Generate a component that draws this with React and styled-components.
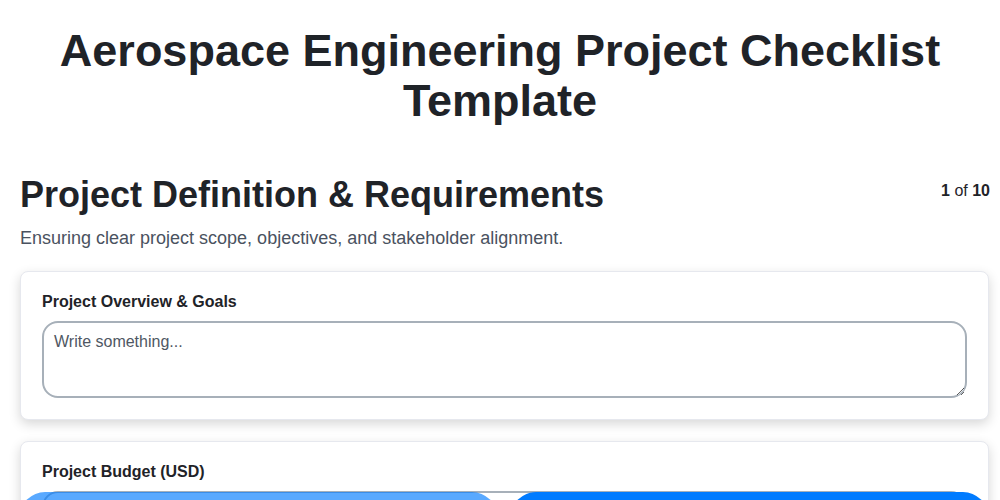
import styled, { createGlobalStyle } from 'styled-components';

const GlobalStyle = createGlobalStyle`
  * { box-sizing: border-box; }
  body {
    margin: 0;
    background: #ffffff;
    color: #1f2328;
    font-family: "Liberation Sans", Arial, sans-serif;
  }
`;

function App() {
  return (
    <>
      <GlobalStyle />
      <Page>
        <Title>Aerospace Engineering Project Checklist Template</Title>
        <Main>
          <SectionHead>
            <SectionTitle>Project Definition &amp; Requirements</SectionTitle>
            <Counter><b>1</b> of <b>10</b></Counter>
          </SectionHead>
          <SectionText>Ensuring clear project scope, objectives, and stakeholder alignment.</SectionText>

          <Card>
            <Label htmlFor="overview">Project Overview &amp; Goals</Label>
            <TextArea id="overview" placeholder="Write something..." />
          </Card>

          <Card>
            <Label htmlFor="budget">Project Budget (USD)</Label>
            <Input id="budget" type="number" />
          </Card>
        </Main>
      </Page>
      <Footer>
        <NavButton disabled>Previous</NavButton>
        <NavButton>Next</NavButton>
      </Footer>
    </>
  );
}

export default App;

const Page = styled.div`
  padding-bottom: 100px;
`;

const Title = styled.h1`
  margin: 26px 0 0;
  padding: 0 40px;
  text-align: center;
  font-size: 45px;
  line-height: 50px;
  font-weight: 700;
  color: #1f2328;
`;

const Main = styled.main`
  padding: 0 11px 0 20px;
  margin-top: 48px;
`;

const SectionHead = styled.div`
  display: flex;
  justify-content: space-between;
  align-items: flex-start;
`;

const SectionTitle = styled.h2`
  margin: 0;
  font-size: 36px;
  line-height: 42px;
  font-weight: 700;
`;

const Counter = styled.span`
  margin-top: 8px;
  margin-right: -1px;
  font-size: 16px;
  color: #1f2328;
`;

const SectionText = styled.p`
  margin: 10px 0 21px;
  font-size: 18px;
  line-height: 24px;
  color: #4a5260;
`;

const Card = styled.div`
  display: flex;
  flex-direction: column;
  gap: 10px;
  padding: 21px 21px 21px;
  margin-bottom: 21px;
  background: #ffffff;
  border: 1px solid #e6e8ee;
  border-radius: 8px;
  box-shadow: 0 4px 12px rgba(0, 0, 0, 0.16);
`;

const Label = styled.label`
  font-size: 16px;
  line-height: 18px;
  font-weight: 700;
  color: #1f2328;
`;

const fieldStyles = `
  width: 100%;
  border: 2px solid #a7b0b9;
  border-radius: 16px;
  font-family: "Liberation Sans", Arial, sans-serif;
  font-size: 16px;
  color: #1f2328;
  background: #ffffff;
  outline: none;
`;

const TextArea = styled.textarea`
  ${fieldStyles}
  height: 77px;
  padding: 10px 10px;
  resize: vertical;
  &::placeholder { color: #4f5763; }
`;

const Input = styled.input`
  ${fieldStyles}
  height: 48px;
  padding: 0 12px;
`;

const Footer = styled.div`
  position: fixed;
  left: 20px;
  right: 12px;
  bottom: -42px;
  display: grid;
  grid-template-columns: 1fr 1fr;
  gap: 14px;
`;

const NavButton = styled.button`
  height: 50px;
  border: none;
  border-radius: 25px;
  background: #007bff;
  color: #ffffff;
  font-family: "Liberation Sans", Arial, sans-serif;
  font-size: 16px;
  font-weight: 700;
  cursor: pointer;
  &:disabled {
    opacity: 0.65;
    cursor: default;
  }
`;
